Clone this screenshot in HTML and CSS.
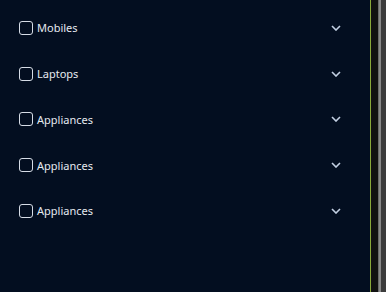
FILE: index.html
```html
<!DOCTYPE html>
<html>
<head>
<meta charset="utf-8">
<link rel="stylesheet" href="styles.css">
</head>
<body>
<div class="frame">
  <div class="panel">
    <div class="row"><span class="box"></span><span class="label">Mobiles</span><svg class="chev" viewBox="0 0 10 6" width="10" height="6"><path d="M1 1 L5 5 L9 1" fill="none" stroke="#c3d0e3" stroke-width="1.6"/></svg></div>
    <div class="row"><span class="box"></span><span class="label">Laptops</span><svg class="chev" viewBox="0 0 10 6" width="10" height="6"><path d="M1 1 L5 5 L9 1" fill="none" stroke="#c3d0e3" stroke-width="1.6"/></svg></div>
    <div class="row"><span class="box"></span><span class="label">Appliances</span><svg class="chev" viewBox="0 0 10 6" width="10" height="6"><path d="M1 1 L5 5 L9 1" fill="none" stroke="#c3d0e3" stroke-width="1.6"/></svg></div>
    <div class="row"><span class="box"></span><span class="label">Appliances</span><svg class="chev" viewBox="0 0 10 6" width="10" height="6"><path d="M1 1 L5 5 L9 1" fill="none" stroke="#c3d0e3" stroke-width="1.6"/></svg></div>
    <div class="row"><span class="box"></span><span class="label">Appliances</span><svg class="chev" viewBox="0 0 10 6" width="10" height="6"><path d="M1 1 L5 5 L9 1" fill="none" stroke="#c3d0e3" stroke-width="1.6"/></svg></div>
  </div>
  <div class="edge"></div>
</div>
</body>
</html>
```
FILE: styles.css
```css
html, body { margin: 0; padding: 0; }
body { width: 386px; height: 292px; overflow: hidden; background: #3a3a3a; font-family: "Noto Sans", "DejaVu Sans", sans-serif; }
.frame { display: flex; height: 292px; }
.panel { width: 370px; background: #030e20; border-right: 1px solid #8aa83a; padding-top: 5px; box-sizing: content-box; }
.row { display: flex; align-items: center; height: 45.75px; padding-left: 19px; padding-right: 29px; }
.box { width: 12px; height: 12px; border: 1px solid #d6dce6; border-radius: 3px; flex: none; }
.label { margin-left: 4px; color: #e6eaf0; font-size: 11px; flex: 1; }
.chev { flex: none; }
.edge { flex: none; width: 15px; background: linear-gradient(to right, #111 0, #111 7px, #6a6a6a 7px, #6a6a6a 8px, #8a8a8a 8px, #8a8a8a 10px, #3c3c3c 10px); }
```
